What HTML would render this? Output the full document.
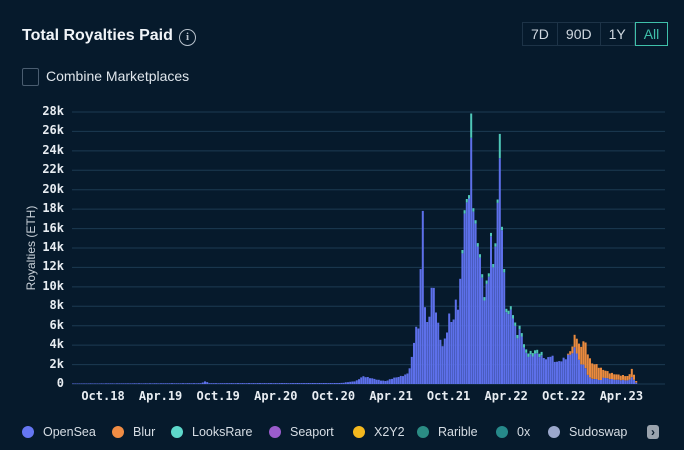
<!DOCTYPE html>
<html><head><meta charset="utf-8"><style>
body{margin:0;width:684px;height:450px;background:#061a2c;overflow:hidden;font-family:"Liberation Sans",sans-serif;color:#e6ecf2;position:relative}
.t{position:absolute;left:22px;top:27px;font-size:16px;font-weight:bold;color:#f0f4f8}
.info{position:absolute;left:179px;top:29px;width:15px;height:15px;border:1.5px solid #b8c2cc;border-radius:50%;color:#b8c2cc;font-size:11px;font-weight:bold;text-align:center;line-height:15px;font-family:"Liberation Serif",serif}
.btns{position:absolute;left:522px;top:22px;height:22px;display:flex;border:1px solid #1d3347}
.btns div{font-size:14px;color:#d0d8e0;padding:0 8px;line-height:22px;border-right:1px solid #1d3347}
.btns .a{border:1px solid #3fc0aa;color:#3fc0aa;margin:-1px -1px -1px 0;line-height:22px}
.cb{position:absolute;left:22px;top:68px;width:15px;height:16px;border:1px solid #4a5d70;border-radius:2px}
.cl{position:absolute;left:46px;top:68px;font-size:14px;color:#dfe6ec}
.yl{position:absolute;right:620px;font-family:"DejaVu Sans Mono","Liberation Mono",monospace;font-weight:bold;font-size:12px;color:#e8edf2}
.xl{position:absolute;top:389px;font-family:"DejaVu Sans Mono","Liberation Mono",monospace;font-weight:bold;font-size:12px;color:#e8edf2;transform:translateX(-50%)}
.yt{position:absolute;left:-14px;top:241px;transform:rotate(-90deg);font-size:12px;color:#c8d0d8;width:90px;text-align:center}
.lg{position:absolute;top:425px;font-size:12.5px;color:#d6dde4;display:flex;align-items:center}
.lg i{display:inline-block;width:12px;height:12px;border-radius:50%;margin-right:9px}
.chev{position:absolute;left:647px;top:425px;width:12px;height:14px;border-radius:3px;background:#9aa3ad;color:#0a1c2c;font-size:12px;font-weight:bold;line-height:14px;text-align:center}
</style></head><body>
<div class="t">Total Royalties Paid</div>
<div class="info">i</div>
<div class="btns"><div>7D</div><div>90D</div><div>1Y</div><div class="a">All</div></div>
<div class="cb"></div><div class="cl">Combine Marketplaces</div>
<div class="yt">Royalties (ETH)</div>
<svg id="c" width="684" height="450" style="position:absolute;left:0;top:0"></svg>
<div id="labels"></div>
<div class="lg" style="left:22px"><i style="background:#6576f2"></i>OpenSea</div>
<div class="lg" style="left:112px"><i style="background:#f08c44"></i>Blur</div>
<div class="lg" style="left:171px"><i style="background:#5ed8cb"></i>LooksRare</div>
<div class="lg" style="left:269px"><i style="background:#9a5ccc"></i>Seaport</div>
<div class="lg" style="left:353px"><i style="background:#f4b81e"></i>X2Y2</div>
<div class="lg" style="left:417px"><i style="background:#2b8c84"></i>Rarible</div>
<div class="lg" style="left:496px"><i style="background:#26898a"></i>0x</div>
<div class="lg" style="left:548px"><i style="background:#9ba8cc"></i>Sudoswap</div>
<div class="chev">›</div>
<script>
var s=document.getElementById('c'),h='',L='';
var y0=384,k=272/28;
for(var i=0;i<=14;i++){var y=y0-i*2*k;h+='<line x1="72" x2="665" y1="'+y+'" y2="'+y+'" stroke="#1c3a52" stroke-width="1"/>';
L+='<div class="yl" style="top:'+(y-8)+'px">'+(i?i*2+'k':'0')+'</div>';}
var xs=['Oct.18','Apr.19','Oct.19','Apr.20','Oct.20','Apr.21','Oct.21','Apr.22','Oct.22','Apr.23'];
for(var i=0;i<10;i++)L+='<div class="xl" style="left:'+(103+i*57.6)+'px">'+xs[i]+'</div>';
document.getElementById('labels').innerHTML=L;
var P=[[72,.05],[200,.08],[205,.3],[208,.08],[340,.1],[355,.3],[362,.8],[370,.6],[378,.4],[385,.3],[392,.6],[400,.8],[406,1],[410,2],[413,4.5],[416,6],[418,5.8],[420,13.5],[422,17.5],[424,8.4],[426,6],[428,6.5],[430,9.8],[432,10.2],[435,7.8],[438,5.3],[442,3.7],[446,5.6],[449,7.3],[452,6],[455,8.7],[458,7.7],[461,14],[464,18],[467,19.4],[469,21.2],[470,28],[471,19.5],[473,19],[476,14],[478,15.2],[480,12.5],[482,9.5],[485,9.5],[487,12],[489,10.7],[490,16],[492,11.4],[495,16.4],[497,18.6],[499,27],[501,16.5],[504,9.4],[507,6.9],[510,8.3],[513,6.6],[516,5.3],[520,5.9],[524,3.5],[530,3.2],[535,3.5],[540,3.2],[545,2.5],[550,3],[555,2.2],[560,2.4],[565,2.7],[570,3.5],[575,5.3],[578,4],[580,3.8],[583,4.7],[586,3.5],[590,2.2],[595,2],[600,1.6],[610,1.1],[620,.9],[628,.8],[631,1.7],[634,.5],[636,.2]];
function v(x){for(var j=1;j<P.length;j++)if(x<=P[j][0]){var a=P[j-1],b=P[j];return a[1]+(b[1]-a[1])*(x-a[0])/(b[0]-a[0]);}return 0;}
for(var x=72;x<=636;x+=2.2){var t=v(x)*(1+0.06*Math.sin(x*1.7));if(t<0.05)t=0.05;
var o=0;if(x>566){o=Math.min(0.75,(x-566)/30)*t; if(x>600)o=0.55*t;}
var tc=0;if(x>460&&x<566&&t>3){tc=t>20?2.5:0.35;}
var b=t-o-tc,H=b*k;
h+='<rect x="'+x.toFixed(1)+'" y="'+(y0-H).toFixed(1)+'" width="2" height="'+H.toFixed(1)+'" fill="#5d70ea"/>';
if(o>0)h+='<rect x="'+x.toFixed(1)+'" y="'+(y0-t*k).toFixed(1)+'" width="2" height="'+(o*k).toFixed(1)+'" fill="#ea8a3e"/>';
if(tc>0)h+='<rect x="'+x.toFixed(1)+'" y="'+(y0-t*k).toFixed(1)+'" width="2" height="'+(tc*k).toFixed(1)+'" fill="#4fc7b8"/>';
}
s.innerHTML=h;
</script>
</body></html>
